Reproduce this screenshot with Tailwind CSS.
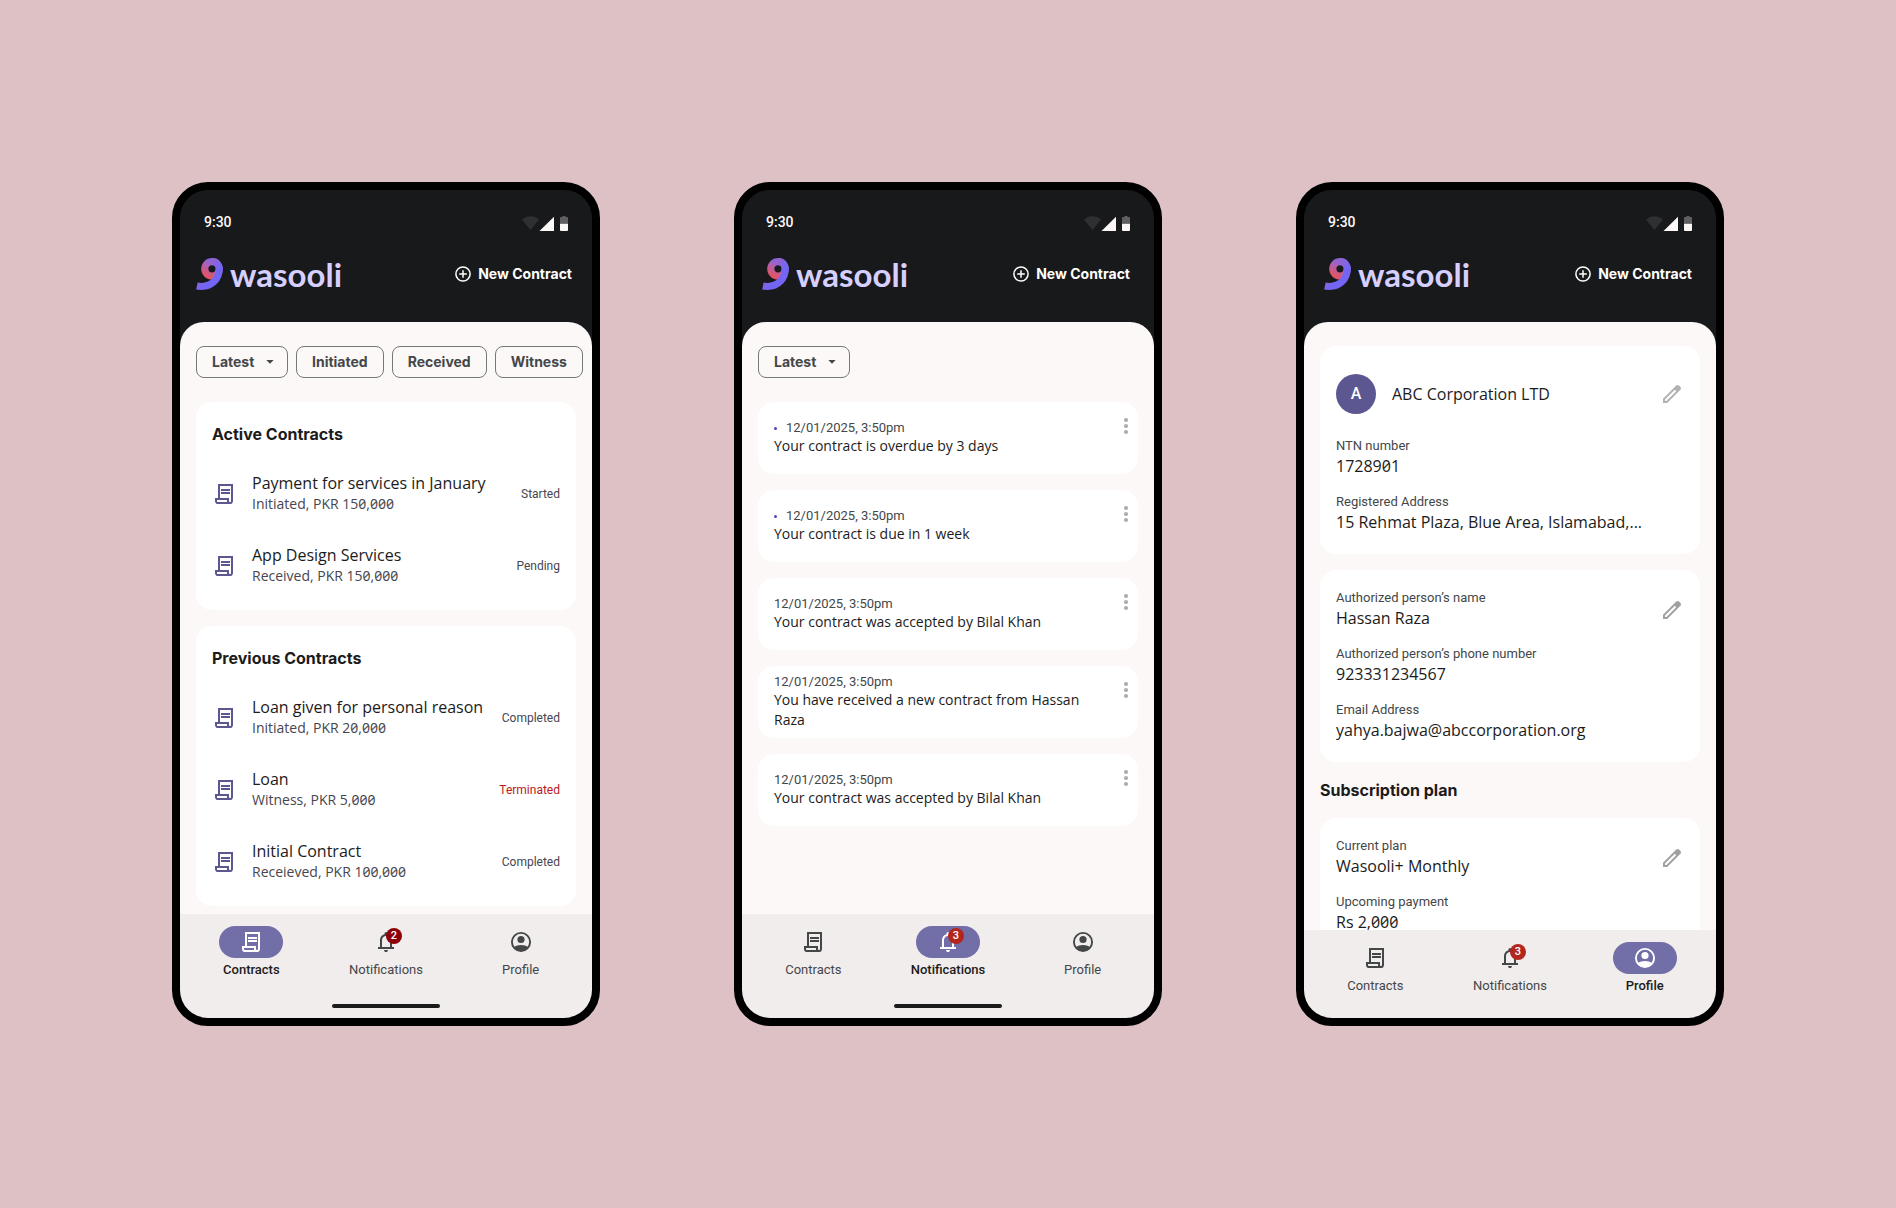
<!DOCTYPE html>
<html lang="en">
<head>
<meta charset="utf-8">
<meta name="viewport" content="width=device-width, initial-scale=1">
<title>Wasooli</title>
<script src="https://cdn.jsdelivr.net/npm/@tailwindcss/browser@4"></script>
</head>
<body class="flex min-h-screen flex-wrap items-center justify-center gap-x-[134px] gap-y-12 bg-[#dec1c5] py-8 font-['Open_Sans',sans-serif] text-[#1c1b1b]">

<!-- Shared icons -->
<svg class="absolute size-0" aria-hidden="true">
  <defs>
    <linearGradient id="ring" gradientUnits="userSpaceOnUse" x1="22" y1="3" x2="14" y2="19">
      <stop offset="0" stop-color="#7a68f0"/><stop offset=".45" stop-color="#a861b8"/><stop offset="1" stop-color="#e0556a"/>
    </linearGradient>
    <linearGradient id="tail" gradientUnits="userSpaceOnUse" x1="14" y1="2" x2="23" y2="10">
      <stop offset="0" stop-color="#9d62c6"/><stop offset="1" stop-color="#7366f4"/>
    </linearGradient>
  </defs>
  <symbol id="logo" viewBox="0 0 28 32">
    <circle cx="16" cy="10.8" r="7.2" fill="none" stroke="url(#ring)" stroke-width="7.2"/>
    <path d="M16 3.6c4.8 0 7.3 3.3 7.3 7.4C23.3 20.500 16.200 28.400 5.500 28.400 3.800 28.400 2.300 28.300 .9 28" fill="none" stroke="url(#tail)" stroke-width="7"/>
  </symbol>
  <symbol id="status" viewBox="0 0 46 20">
    <path d="M0 7.500C4.800 3 12.200 3 17 7.500L8.500 18Z" fill="#2f3031"/>
    <path d="M17.500 19 32 4.700V19Z" fill="#fcf8f8"/>
    <path d="M38 6a1 1 0 0 1 1-1h1.500V4h3v1H45a1 1 0 0 1 1 1v5.700h-8Z" fill="#5f5f60"/>
    <path d="M38 11.700h8V18a1 1 0 0 1-1 1h-6a1 1 0 0 1-1-1Z" fill="#fcf8f8"/>
  </symbol>
  <symbol id="plus" viewBox="0 0 18 18">
    <g fill="none" stroke="currentColor" stroke-width="1.500"><circle cx="9" cy="9" r="7.100"/><path d="M9 5.200v7.600M5.200 9h7.600"/></g>
  </symbol>
  <symbol id="contract" viewBox="0 0 24 24">
    <path fill="currentColor" d="M6 22q-1.250 0-2.125-.875T3 19v-3h3V2h15v17q0 1.250-.875 2.125T18 22H6Zm12-2q.425 0 .713-.288T19 19V4H8v12h9v3q0 .425.288.713T18 20ZM9 9V7h9v2H9Zm0 3v-2h9v2H9ZM6 20h9v-2H5v1q0 .425.288.713T6 20Z"/>
  </symbol>
  <symbol id="bell" viewBox="0 0 24 24">
    <path fill="currentColor" d="M4 19v-2h2v-7q0-2.075 1.250-3.688T10.500 4.200v-.7q0-.625.438-1.063T12 2q.625 0 1.063.438T13.500 3.500v.7q2 .5 3.250 2.113T18 10v7h2v2H4Zm8 3q-.825 0-1.413-.588T10 20h4q0 .825-.588 1.413T12 22Zm-4-5h8v-7q0-1.650-1.175-2.825T12 6q-1.650 0-2.825 1.175T8 10v7Z"/>
  </symbol>
  <symbol id="person" viewBox="0 0 24 24">
    <circle cx="12" cy="12" r="9.100" fill="none" stroke="currentColor" stroke-width="1.900"/>
    <circle cx="12" cy="9.500" r="3.600" fill="currentColor"/>
    <path fill="currentColor" d="M4.800 17.300C6.800 15.700 9.300 14.900 12 14.900s5.200.8 7.200 2.400C17.600 19.700 15 21.300 12 21.300s-5.600-1.600-7.200-4Z"/>
  </symbol>
  <symbol id="pencil" viewBox="0 0 24 24">
    <path fill="currentColor" d="M5 19h1.425L16.200 9.225 14.775 7.800 5 17.575V19Zm-2 2v-4.250L16.200 3.575q.3-.275.663-.425T17.625 3q.4 0 .775.150t.65.450L20.425 5q.3.275.438.650T21 6.400q0 .4-.137.763t-.438.662L7.250 21H3Z"/>
  </symbol>
  <symbol id="dots" viewBox="0 0 24 24">
    <g fill="#aeabb3"><circle cx="12" cy="6" r="2.100"/><circle cx="12" cy="12" r="2.100"/><circle cx="12" cy="18" r="2.100"/></g>
  </symbol>
</svg>

<!-- Contracts screen -->
<section class="flex h-[844px] w-[428px] flex-col overflow-hidden rounded-[36px] border-8 border-black bg-[#18191b]">
  <div class="flex h-[52px] shrink-0 items-end justify-between px-6 pb-[10px]">
    <span class="font-[Roboto,sans-serif] text-sm font-medium text-[#fcf8f8]">9:30</span>
    <svg class="h-5 w-[46px]"><use href="#status"/></svg>
  </div>
  <header class="mb-4 flex h-16 shrink-0 items-center justify-between pl-4 pr-5">
    <a href="#" class="flex items-center gap-[6px]">
      <svg class="h-8 w-7"><use href="#logo"/></svg>
      <span class="font-[Lato,sans-serif] text-[33px] leading-8 font-bold text-[#d6cfff]">wasooli</span>
    </a>
    <button class="flex items-center gap-[6px] font-[Inter,sans-serif] text-sm font-bold text-white"><svg class="size-[18px]"><use href="#plus"/></svg>New Contract</button>
  </header>
  <main class="flex min-h-0 flex-1 flex-col gap-6 overflow-hidden rounded-t-3xl bg-[#fcf8f8] px-4 pt-6">
    <div class="flex shrink-0 gap-2 font-[Inter,sans-serif] text-sm font-bold text-[#444748]">
      <div class="relative shrink-0">
        <select aria-label="Sort contracts" class="h-8 w-[92px] appearance-none rounded-lg border border-[#747878] bg-transparent px-[15px]"><option>Latest</option></select>
        <svg class="pointer-events-none absolute top-[14px] right-[14px] h-1 w-2" viewBox="0 0 8 4"><path d="M.3 0h7.400L4 3.800Z" fill="currentColor"/></svg>
      </div>
      <button class="h-8 shrink-0 rounded-lg border border-[#747878] px-[15px]">Initiated</button>
      <button class="h-8 shrink-0 rounded-lg border border-[#747878] px-[15px]">Received</button>
      <button class="h-8 shrink-0 rounded-lg border border-[#747878] px-[15px]">Witness</button>
    </div>
    <div class="flex flex-col gap-4">
      <section class="rounded-2xl bg-white px-4 pt-5 pb-2">
        <h2 class="mb-3 font-[Inter,sans-serif] text-base font-bold">Active Contracts</h2>
        <ul>
          <li class="flex h-[72px] items-center gap-4">
            <svg class="size-6 shrink-0 text-[#5d5791]"><use href="#contract"/></svg>
            <div class="flex-1 pb-1"><p class="text-base whitespace-nowrap">Payment for services in January</p><p class="text-sm leading-[18px] slashed-zero text-[#47464f]">Initiated, PKR 150,000</p></div>
            <span class="font-[Roboto,sans-serif] text-xs text-[#47464f]">Started</span>
          </li>
          <li class="flex h-[72px] items-center gap-4">
            <svg class="size-6 shrink-0 text-[#5d5791]"><use href="#contract"/></svg>
            <div class="flex-1 pb-1"><p class="text-base whitespace-nowrap">App Design Services</p><p class="text-sm leading-[18px] slashed-zero text-[#47464f]">Received, PKR 150,000</p></div>
            <span class="font-[Roboto,sans-serif] text-xs text-[#47464f]">Pending</span>
          </li>
        </ul>
      </section>
      <section class="rounded-2xl bg-white px-4 pt-5 pb-2">
        <h2 class="mb-3 font-[Inter,sans-serif] text-base font-bold">Previous Contracts</h2>
        <ul>
          <li class="flex h-[72px] items-center gap-4">
            <svg class="size-6 shrink-0 text-[#5d5791]"><use href="#contract"/></svg>
            <div class="flex-1 pb-1"><p class="text-base whitespace-nowrap">Loan given for personal reason</p><p class="text-sm leading-[18px] slashed-zero text-[#47464f]">Initiated, PKR 20,000</p></div>
            <span class="font-[Roboto,sans-serif] text-xs text-[#47464f]">Completed</span>
          </li>
          <li class="flex h-[72px] items-center gap-4">
            <svg class="size-6 shrink-0 text-[#5d5791]"><use href="#contract"/></svg>
            <div class="flex-1 pb-1"><p class="text-base whitespace-nowrap">Loan</p><p class="text-sm leading-[18px] slashed-zero text-[#47464f]">Witness, PKR 5,000</p></div>
            <span class="font-[Roboto,sans-serif] text-xs text-[#ba1a1a]">Terminated</span>
          </li>
          <li class="flex h-[72px] items-center gap-4">
            <svg class="size-6 shrink-0 text-[#5d5791]"><use href="#contract"/></svg>
            <div class="flex-1 pb-1"><p class="text-base whitespace-nowrap">Initial Contract</p><p class="text-sm leading-[18px] slashed-zero text-[#47464f]">Receieved, PKR 100,000</p></div>
            <span class="font-[Roboto,sans-serif] text-xs text-[#47464f]">Completed</span>
          </li>
        </ul>
      </section>
    </div>
  </main>
  <nav class="flex shrink-0 flex-col items-center bg-[#f1edec] font-[Roboto,sans-serif] text-[13px] leading-4 text-[#444748]">
    <div class="flex h-20 w-full gap-2 px-2 pt-3">
      <a href="#" class="flex flex-1 flex-col items-center gap-1 font-medium text-[#1c1b1b]"><span class="flex h-8 w-16 items-center justify-center rounded-full bg-[#726ea7] text-white"><svg class="size-6"><use href="#contract"/></svg></span>Contracts</a>
      <a href="#" class="flex flex-1 flex-col items-center gap-1"><span class="flex h-8 w-16 items-center justify-center"><span class="relative"><svg class="size-6"><use href="#bell"/></svg><span class="absolute -top-[2px] left-3 flex size-4 items-center justify-center rounded-full bg-[#8c0009] text-[11px] font-medium text-white">2</span></span></span>Notifications</a>
      <a href="#" class="flex flex-1 flex-col items-center gap-1"><span class="flex h-8 w-16 items-center justify-center"><svg class="size-6"><use href="#person"/></svg></span>Profile</a>
    </div>
    <div class="flex h-6 items-center"><div class="h-1 w-[108px] rounded-full bg-[#1c1b1b]"></div></div>
  </nav>
</section>

<!-- Notifications screen -->
<section class="flex h-[844px] w-[428px] flex-col overflow-hidden rounded-[36px] border-8 border-black bg-[#18191b]">
  <div class="flex h-[52px] shrink-0 items-end justify-between px-6 pb-[10px]">
    <span class="font-[Roboto,sans-serif] text-sm font-medium text-[#fcf8f8]">9:30</span>
    <svg class="h-5 w-[46px]"><use href="#status"/></svg>
  </div>
  <header class="mb-4 flex h-16 shrink-0 items-center justify-between pl-5 pr-6">
    <a href="#" class="flex items-center gap-[6px]">
      <svg class="h-8 w-7"><use href="#logo"/></svg>
      <span class="font-[Lato,sans-serif] text-[33px] leading-8 font-bold text-[#d6cfff]">wasooli</span>
    </a>
    <button class="flex items-center gap-[6px] font-[Inter,sans-serif] text-sm font-bold text-white"><svg class="size-[18px]"><use href="#plus"/></svg>New Contract</button>
  </header>
  <main class="flex min-h-0 flex-1 flex-col gap-6 overflow-hidden rounded-t-3xl bg-[#fcf8f8] px-4 pt-6">
    <div class="flex shrink-0 font-[Inter,sans-serif] text-sm font-bold text-[#444748]">
      <div class="relative shrink-0">
        <select aria-label="Sort notifications" class="h-8 w-[92px] appearance-none rounded-lg border border-[#747878] bg-transparent px-[15px]"><option>Latest</option></select>
        <svg class="pointer-events-none absolute top-[14px] right-[14px] h-1 w-2" viewBox="0 0 8 4"><path d="M.3 0h7.400L4 3.800Z" fill="currentColor"/></svg>
      </div>
    </div>
    <ul class="flex flex-col gap-4">
      <li class="flex h-[72px] items-center rounded-2xl bg-white pl-4">
        <div class="flex-1">
          <p class="flex items-center gap-[9px] font-[Roboto,sans-serif] text-[13px] leading-4 text-[#444748]"><span class="size-[3px] rounded-full bg-[#4f46c0]"></span>12/01/2025, 3:50pm</p>
          <p class="text-sm">Your contract is overdue by 3 days</p>
        </div>
        <button aria-label="More options" class="mt-3 self-start"><svg class="size-6"><use href="#dots"/></svg></button>
      </li>
      <li class="flex h-[72px] items-center rounded-2xl bg-white pl-4">
        <div class="flex-1">
          <p class="flex items-center gap-[9px] font-[Roboto,sans-serif] text-[13px] leading-4 text-[#444748]"><span class="size-[3px] rounded-full bg-[#4f46c0]"></span>12/01/2025, 3:50pm</p>
          <p class="text-sm">Your contract is due in 1 week</p>
        </div>
        <button aria-label="More options" class="mt-3 self-start"><svg class="size-6"><use href="#dots"/></svg></button>
      </li>
      <li class="flex h-[72px] items-center rounded-2xl bg-white pl-4">
        <div class="flex-1">
          <p class="font-[Roboto,sans-serif] text-[13px] leading-4 text-[#444748]">12/01/2025, 3:50pm</p>
          <p class="text-sm">Your contract was accepted by Bilal Khan</p>
        </div>
        <button aria-label="More options" class="mt-3 self-start"><svg class="size-6"><use href="#dots"/></svg></button>
      </li>
      <li class="flex h-[72px] items-center rounded-2xl bg-white pl-4">
        <div class="flex-1 pr-4">
          <p class="font-[Roboto,sans-serif] text-[13px] leading-4 text-[#444748]">12/01/2025, 3:50pm</p>
          <p class="text-sm">You have received a new contract from Hassan Raza</p>
        </div>
        <button aria-label="More options" class="mt-3 self-start"><svg class="size-6"><use href="#dots"/></svg></button>
      </li>
      <li class="flex h-[72px] items-center rounded-2xl bg-white pl-4">
        <div class="flex-1">
          <p class="font-[Roboto,sans-serif] text-[13px] leading-4 text-[#444748]">12/01/2025, 3:50pm</p>
          <p class="text-sm">Your contract was accepted by Bilal Khan</p>
        </div>
        <button aria-label="More options" class="mt-3 self-start"><svg class="size-6"><use href="#dots"/></svg></button>
      </li>
    </ul>
  </main>
  <nav class="flex shrink-0 flex-col items-center bg-[#f1edec] font-[Roboto,sans-serif] text-[13px] leading-4 text-[#444748]">
    <div class="flex h-20 w-full gap-2 px-2 pt-3">
      <a href="#" class="flex flex-1 flex-col items-center gap-1"><span class="flex h-8 w-16 items-center justify-center"><svg class="size-6"><use href="#contract"/></svg></span>Contracts</a>
      <a href="#" class="flex flex-1 flex-col items-center gap-1 font-medium text-[#1c1b1b]"><span class="flex h-8 w-16 items-center justify-center rounded-full bg-[#726ea7] text-white"><span class="relative"><svg class="size-6"><use href="#bell"/></svg><span class="absolute -top-[2px] left-3 flex size-4 items-center justify-center rounded-full bg-[#b3261e] text-[11px] font-medium text-white">3</span></span></span>Notifications</a>
      <a href="#" class="flex flex-1 flex-col items-center gap-1"><span class="flex h-8 w-16 items-center justify-center"><svg class="size-6"><use href="#person"/></svg></span>Profile</a>
    </div>
    <div class="flex h-6 items-center"><div class="h-1 w-[108px] rounded-full bg-[#1c1b1b]"></div></div>
  </nav>
</section>

<!-- Profile screen -->
<section class="flex h-[844px] w-[428px] flex-col overflow-hidden rounded-[36px] border-8 border-black bg-[#18191b]">
  <div class="flex h-[52px] shrink-0 items-end justify-between px-6 pb-[10px]">
    <span class="font-[Roboto,sans-serif] text-sm font-medium text-[#fcf8f8]">9:30</span>
    <svg class="h-5 w-[46px]"><use href="#status"/></svg>
  </div>
  <header class="mb-4 flex h-16 shrink-0 items-center justify-between pl-5 pr-6">
    <a href="#" class="flex items-center gap-[6px]">
      <svg class="h-8 w-7"><use href="#logo"/></svg>
      <span class="font-[Lato,sans-serif] text-[33px] leading-8 font-bold text-[#d6cfff]">wasooli</span>
    </a>
    <button class="flex items-center gap-[6px] font-[Inter,sans-serif] text-sm font-bold text-white"><svg class="size-[18px]"><use href="#plus"/></svg>New Contract</button>
  </header>
  <main class="flex min-h-0 flex-1 flex-col gap-4 overflow-hidden rounded-t-3xl bg-[#fcf8f8] px-4 pt-6">
    <section class="shrink-0 rounded-2xl bg-white px-4 pt-3 pb-5">
      <div class="mb-2 flex h-[72px] items-center gap-4">
        <span class="flex size-10 items-center justify-center rounded-full bg-[#5d5791] font-[Roboto,sans-serif] text-base font-medium text-white">A</span>
        <h2 class="flex-1 text-base">ABC Corporation LTD</h2>
        <button aria-label="Edit company" class="text-[#b2b2b2]"><svg class="size-6"><use href="#pencil"/></svg></button>
      </div>
      <dl class="flex flex-col gap-4">
        <div>
          <dt class="font-[Roboto,sans-serif] text-[13px] leading-4 text-[#444748]">NTN number</dt>
          <dd class="text-base slashed-zero">1728901</dd>
        </div>
        <div>
          <dt class="font-[Roboto,sans-serif] text-[13px] leading-4 text-[#444748]">Registered Address</dt>
          <dd class="text-base whitespace-nowrap">15 Rehmat Plaza, Blue Area, Islamabad,...</dd>
        </div>
      </dl>
    </section>
    <section class="flex shrink-0 rounded-2xl bg-white px-4 py-5">
      <dl class="flex flex-1 flex-col gap-4">
        <div>
          <dt class="font-[Roboto,sans-serif] text-[13px] leading-4 text-[#444748]">Authorized person’s name</dt>
          <dd class="text-base">Hassan Raza</dd>
        </div>
        <div>
          <dt class="font-[Roboto,sans-serif] text-[13px] leading-4 text-[#444748]">Authorized person’s phone number</dt>
          <dd class="text-base">923331234567</dd>
        </div>
        <div>
          <dt class="font-[Roboto,sans-serif] text-[13px] leading-4 text-[#444748]">Email Address</dt>
          <dd class="text-base">yahya.bajwa@abccorporation.org</dd>
        </div>
      </dl>
      <button aria-label="Edit authorized person" class="mt-2 self-start text-[#a0a0a0]"><svg class="size-6"><use href="#pencil"/></svg></button>
    </section>
    <h2 class="shrink-0 font-[Inter,sans-serif] text-base font-bold">Subscription plan</h2>
    <section class="flex shrink-0 rounded-2xl bg-white px-4 py-5">
      <dl class="flex flex-1 flex-col gap-4">
        <div>
          <dt class="font-[Roboto,sans-serif] text-[13px] leading-4 text-[#444748]">Current plan</dt>
          <dd class="text-base">Wasooli+ Monthly</dd>
        </div>
        <div>
          <dt class="font-[Roboto,sans-serif] text-[13px] leading-4 text-[#444748]">Upcoming payment</dt>
          <dd class="text-base slashed-zero">Rs 2,000</dd>
        </div>
      </dl>
      <button aria-label="Edit plan" class="mt-2 self-start text-[#a0a0a0]"><svg class="size-6"><use href="#pencil"/></svg></button>
    </section>
  </main>
  <nav class="flex h-[88px] shrink-0 gap-2 bg-[#f1edec] px-2 pt-3 font-[Roboto,sans-serif] text-[13px] leading-4 text-[#444748]">
    <a href="#" class="flex flex-1 flex-col items-center gap-1"><span class="flex h-8 w-16 items-center justify-center"><svg class="size-6"><use href="#contract"/></svg></span>Contracts</a>
    <a href="#" class="flex flex-1 flex-col items-center gap-1"><span class="flex h-8 w-16 items-center justify-center"><span class="relative"><svg class="size-6"><use href="#bell"/></svg><span class="absolute -top-[2px] left-3 flex size-4 items-center justify-center rounded-full bg-[#b3261e] text-[11px] font-medium text-white">3</span></span></span>Notifications</a>
    <a href="#" class="flex flex-1 flex-col items-center gap-1 font-medium text-[#1c1b1b]"><span class="flex h-8 w-16 items-center justify-center rounded-full bg-[#726ea7] text-white"><svg class="size-6"><use href="#person"/></svg></span>Profile</a>
  </nav>
</section>
</body>
</html>
